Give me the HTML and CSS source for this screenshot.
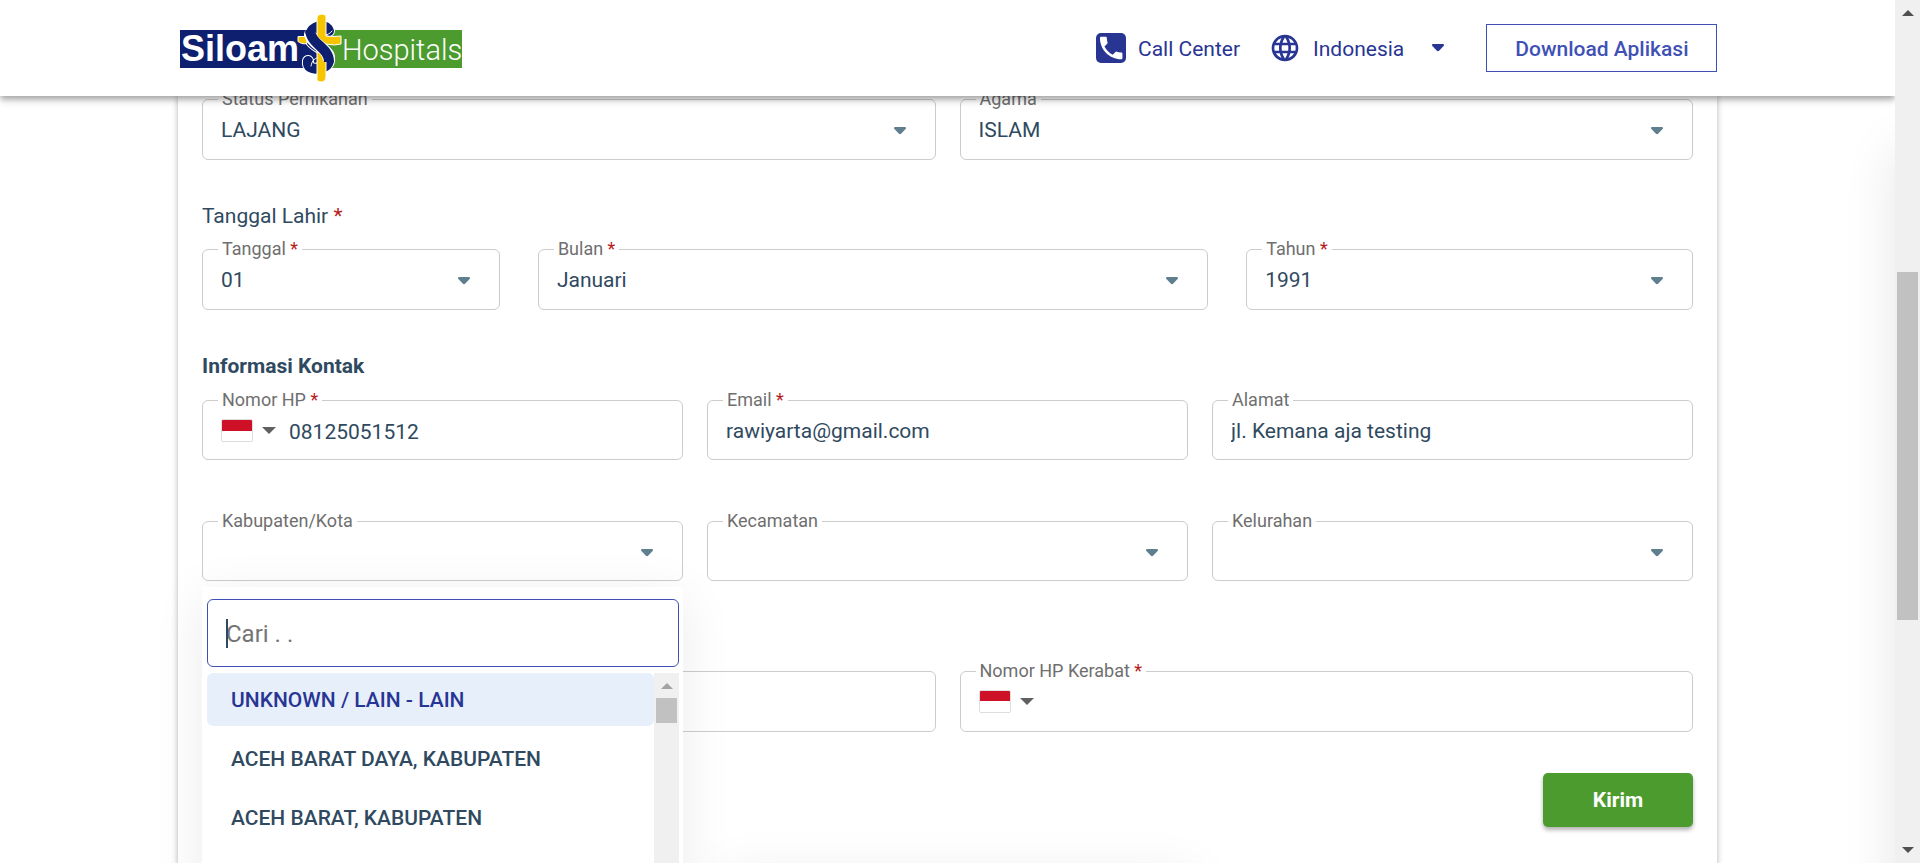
FILE: index.html
```html
<!DOCTYPE html>
<html lang="id">
<head>
<meta charset="utf-8">
<title>Siloam Hospitals</title>
<link rel="stylesheet" href="styles.css">
</head>
<body>
<svg class="defs" aria-hidden="true">
  <symbol id="caret" viewBox="0 0 12 8"><path d="M1.2 0h9.6c1.1 0 1.5 1.3.8 2.1L7.300 6.600c-.8.8-1.800.8-2.600 0L.4 2.100C-.3 1.300.1 0 1.200 0z" fill="currentColor"/></symbol>
  <symbol id="triangle" viewBox="0 0 12 6"><path d="M0 0h12L6 6z" fill="currentColor"/></symbol>
</svg>
<div class="app">
  <div class="page">
    <header class="topbar">
      <div class="topbar-inner">
        <a class="logo" href="#" aria-label="Siloam Hospitals">
          <svg width="283" height="70" viewBox="0 0 283 70">
            <rect x="0" y="16" width="141" height="38" fill="#0d1f6e"/>
            <rect x="141" y="16" width="141" height="38" fill="#4b9b2e"/>
            <text class="logo-siloam" x="1" y="47">Siloam</text>
            <text class="logo-hospitals" x="162" y="46">Hospitals</text>
            <g fill="none" stroke-linecap="round">
              <path d="M149 17C147 12 144 12 141 12C132 13 128 20 131 27C136 34 148 36 149 43C150 50 146 53 140 54C132 56 127 53 128 47" stroke="#fff" stroke-width="12"/>
              <path d="M149 17C147 12 144 12 141 12C132 13 128 20 131 27C136 34 148 36 149 43C150 50 146 53 140 54C132 56 127 53 128 47" stroke="#0d1f6e" stroke-width="10"/>
              <path d="M131 52C132 46 135 44 140 43M144 21C147 21 150 20 152 17" stroke="#fff"/>
            </g>
            <path d="M118 22.500h9v7c-4 1-7-.5-9-2z" fill="#f6c500" stroke="#fff"/>
            <path d="M137 3q1-3 5-3t4 3v19q9 1 15 0v8q-6 2-15 0V62q0 6-5 6t-4-5z" fill="#f6c500" stroke="#fff"/>
            <g fill="none">
              <path d="M130 19C131 31 149 33 149 47" stroke="#fff" stroke-width="12"/>
              <path d="M130 16C131 31 149 33 149 48" stroke="#0d1f6e" stroke-width="10"/>
            </g>
          </svg>
        </a>
        <nav class="topnav">
          <a class="nav-link" href="#">
            <svg width="30" height="30" viewBox="0 0 30 30"><rect width="30" height="30" rx="5" fill="#283593"/><path transform="translate(.2 0) scale(1.250)" d="M6.620 10.790c1.440 2.830 3.760 5.140 6.590 6.590l2.200-2.200c.27-.27.67-.36 1.020-.24 1.120.37 2.330.57 3.570.57.55 0 1 .45 1 1V20c0 .55-.45 1-1 1-9.390 0-17-7.610-17-17 0-.55.45-1 1-1h3.500c.55 0 1 .45 1 1 0 1.250.2 2.450.57 3.570.11.35.03.74-.25 1.020l-2.200 2.200z" fill="#fff"/></svg>
            <span>Call Center</span>
          </a>
          <button class="nav-link nav-language" type="button">
            <svg width="32" height="32" viewBox="0 0 24 24" fill="#283593"><path d="M11.990 2C6.470 2 2 6.480 2 12s4.470 10 9.990 10C17.520 22 22 17.520 22 12S17.520 2 11.990 2zm6.930 6h-2.950a15.650 15.650 0 0 0-1.380-3.560A8.030 8.030 0 0 1 18.920 8zM12 4.040c.830 1.200 1.480 2.530 1.910 3.960h-3.820c.43-1.430 1.080-2.760 1.910-3.960zM4.260 14C4.100 13.360 4 12.690 4 12s.1-1.360.26-2h3.380c-.08.66-.14 1.320-.14 2s.06 1.340.14 2H4.260zm.82 2h2.950c.32 1.250.78 2.450 1.380 3.560A7.987 7.987 0 0 1 5.080 16zm2.950-8H5.080a7.987 7.987 0 0 1 4.330-3.560A15.650 15.650 0 0 0 8.030 8zM12 19.960c-.83-1.200-1.480-2.530-1.910-3.960h3.820c-.43 1.430-1.080 2.760-1.910 3.960zM14.340 14H9.660c-.09-.66-.16-1.320-.16-2s.07-1.350.16-2h4.680c.09.65.16 1.320.16 2s-.07 1.340-.16 2zm.25 5.560c.6-1.110 1.060-2.310 1.380-3.560h2.950a8.030 8.030 0 0 1-4.330 3.560zM16.360 14c.08-.66.14-1.320.14-2s-.06-1.340-.14-2h3.380c.16.64.26 1.310.26 2s-.1 1.360-.26 2h-3.380z"/></svg>
            <span>Indonesia</span>
            <svg class="nav-caret" width="12" height="8"><use href="#caret"/></svg>
          </button>
          <a class="download" href="#">Download Aplikasi</a>
        </nav>
      </div>
    </header>

    <form class="card">
      <div class="row halves">
        <div class="field"><label for="status">Status Pernikahan</label><select id="status"><option>LAJANG</option></select><svg class="caret" width="12" height="8"><use href="#caret"/></svg></div>
        <div class="field"><label for="agama">Agama</label><select id="agama"><option>ISLAM</option></select><svg class="caret" width="12" height="8"><use href="#caret"/></svg></div>
      </div>

      <p class="group-title">Tanggal Lahir <i>*</i></p>
      <div class="row birth">
        <div class="field"><label for="tanggal">Tanggal <i>*</i></label><select id="tanggal"><option>01</option></select><svg class="caret" width="12" height="8"><use href="#caret"/></svg></div>
        <div class="field"><label for="bulan">Bulan <i>*</i></label><select id="bulan"><option>Januari</option></select><svg class="caret" width="12" height="8"><use href="#caret"/></svg></div>
        <div class="field"><label for="tahun">Tahun <i>*</i></label><select id="tahun"><option>1991</option></select><svg class="caret" width="12" height="8"><use href="#caret"/></svg></div>
      </div>

      <h2 class="group-title strong">Informasi Kontak</h2>
      <div class="row thirds">
        <div class="field phone">
          <label for="hp">Nomor HP <i>*</i></label>
          <button class="country" type="button" aria-label="Indonesia +62"><span class="flag"></span><svg width="14" height="7"><use href="#triangle"/></svg></button>
          <input id="hp" type="tel" value="08125051512">
        </div>
        <div class="field"><label for="email">Email <i>*</i></label><input id="email" type="email" value="rawiyarta@gmail.com"></div>
        <div class="field"><label for="alamat">Alamat</label><input id="alamat" type="text" value="jl. Kemana aja testing"></div>
      </div>

      <div class="row thirds spaced">
        <div class="field">
          <label for="kabupaten">Kabupaten/Kota</label><select id="kabupaten"></select><svg class="caret" width="12" height="8"><use href="#caret"/></svg>
          <div class="dropdown">
            <input class="search" type="text" placeholder="Cari . ." aria-label="Cari kabupaten atau kota">
            <span class="text-cursor"></span>
            <div class="list">
              <ul class="options" role="listbox">
                <li role="option" aria-selected="true">UNKNOWN / LAIN - LAIN</li>
                <li role="option">ACEH BARAT DAYA, KABUPATEN</li>
                <li role="option">ACEH BARAT, KABUPATEN</li>
              </ul>
              <div class="list-scroll"><svg width="12" height="6"><path d="M0 6h12L6 0z" fill="#a3a3a3"/></svg><span></span></div>
            </div>
          </div>
        </div>
        <div class="field"><label for="kecamatan">Kecamatan</label><select id="kecamatan"></select><svg class="caret" width="12" height="8"><use href="#caret"/></svg></div>
        <div class="field"><label for="kelurahan">Kelurahan</label><select id="kelurahan"></select><svg class="caret" width="12" height="8"><use href="#caret"/></svg></div>
      </div>

      <div class="row halves relatives">
        <div class="field"><input type="text" aria-label="Nama Kerabat"></div>
        <div class="field phone">
          <label for="hpk">Nomor HP Kerabat <i>*</i></label>
          <button class="country" type="button" aria-label="Indonesia +62"><span class="flag"></span><svg width="14" height="7"><use href="#triangle"/></svg></button>
          <input id="hpk" type="tel">
        </div>
      </div>

      <div class="actions"><button class="submit" type="submit">Kirim</button></div>
    </form>
    <div class="drawer-edge"></div>
    <div class="sheet-edge"></div>
  </div>
  <div class="scrollbar">
    <svg width="12" height="6"><path d="M0 6h12L6 0z" fill="#505050"/></svg>
    <div class="track"><div class="thumb" style="top:30.4%;height:42.8%"></div></div>
    <svg width="12" height="6"><path d="M0 0h12L6 6z" fill="#505050"/></svg>
  </div>
</div>
</body>
</html>
```

FILE: styles.css
```css
* { box-sizing: border-box; }

body {
  margin: 0;
  background: #fff;
  color: #2f4a60;
  font-family: Roboto, "Liberation Sans", sans-serif;
  font-size: 21px;
  line-height: 24px;
}

button, input, select {
  font: inherit;
  color: inherit;
}

i {
  color: #b71c1c;
  font-style: normal;
}

.defs {
  display: block;
  width: 0;
  height: 0;
}

.app {
  display: flex;
  height: 100vh;
  overflow: hidden;
}

.page {
  position: relative;
  flex: 1;
  min-width: 0;
  display: flex;
  flex-direction: column;
  overflow: hidden;
}

/* Header */
.topbar {
  position: relative;
  z-index: 5;
  flex: none;
  padding: 14px 0 12px;
  background: #fff;
  box-shadow: 0 3px 5px -1px rgba(0, 0, 0, .2), 0 5px 6px rgba(0, 0, 0, .14), 0 1px 13px rgba(0, 0, 0, .12);
}

.topbar-inner {
  display: flex;
  align-items: flex-start;
  justify-content: space-between;
  max-width: 1538px;
  margin: 0 auto;
}

.logo {
  display: flex;
  padding-left: 1px;
}

.logo-siloam {
  fill: #fff;
  font: bold 36px "Liberation Sans", sans-serif;
}

.logo-hospitals {
  fill: #fff;
  font: 300 29px Roboto, sans-serif;
}

.topnav {
  display: flex;
  align-items: center;
  height: 68px;
}

.nav-link {
  display: flex;
  align-items: center;
  gap: 12px;
  padding: 0;
  border: 0;
  background: none;
  color: #283593;
  text-decoration: none;
}

.nav-link span { padding-top: 2px; }
.nav-language { margin-left: 29px; }
.nav-caret { margin-left: 16px; }

.download {
  margin-left: 42px;
  padding: 12px 27px 10px 28px;
  border: 1px solid #3f51b5;
  color: #3f51b5;
  font-weight: 500;
  text-decoration: none;
}

/* Form */
.card {
  flex: 1 0 auto;
  width: calc(100% - 48px);
  max-width: 1539px;
  margin: 0 auto;
  padding: 3px 24px 40px;
  background: #fff;
  box-shadow: 0 0 6px rgba(0, 0, 0, .3);
}

.row { display: grid; gap: 24px; }
.halves { grid-template-columns: 1fr 1fr; }
.thirds { grid-template-columns: 1fr 1fr 1fr; }
.birth { grid-template-columns: 4fr 9fr 6fr; gap: 38px; }
.spaced { margin-top: 61px; }
.relatives { margin-top: 90px; }

.group-title {
  margin: 44px 0 21px;
  font-size: 21px;
  font-weight: 400;
}

.strong {
  margin-bottom: 22px;
  font-weight: 700;
}

.field {
  position: relative;
  display: flex;
  height: 61px;
  border: 1px solid #ccc;
  border-radius: 6px;
}

.thirds .field { height: 60px; }

.field label {
  position: absolute;
  top: -13px;
  left: 15px;
  padding: 0 4px;
  background: #fff;
  color: #6f6f6f;
  font-size: 18px;
}

.field input, .field select {
  width: 100%;
  min-width: 0;
  padding: 1px 18px 0;
  border: 0;
  border-radius: 6px;
  outline: 0;
  background: none;
  appearance: none;
}

.caret {
  position: absolute;
  top: 27px;
  right: 29px;
  color: #5f7f8f;
  pointer-events: none;
}

.phone { align-items: center; }

.country {
  display: flex;
  align-items: center;
  gap: 9px;
  flex: none;
  padding: 0 0 0 18px;
  border: 0;
  background: none;
  color: #606060;
}

.flag {
  width: 32px;
  height: 23px;
  border: 1px solid #ddd;
  border-radius: 2px;
  background: linear-gradient(#ce1126 50%, #fff 50%);
}

.field.phone input { padding: 3px 18px 0 13px; }

/* City picker */
.dropdown {
  position: absolute;
  z-index: 3;
  top: 65px;
  left: -1px;
  right: -1px;
  padding: 12px 4px 4px 5px;
  background: #fff;
  box-shadow: 0 10px 50px rgba(0, 0, 0, .08);
}

.dropdown .search {
  display: block;
  height: 68px;
  border: 1px solid #3f51b5;
  font-size: 24px;
}

.search::placeholder { color: #757575; opacity: 1; }

.text-cursor {
  position: absolute;
  top: 32px;
  left: 24px;
  width: 2px;
  height: 29px;
  background: #2f4a60;
}

.list {
  display: flex;
  height: 260px;
  margin-top: 6px;
  overflow: hidden;
}

.options {
  flex: 1;
  margin: 0;
  padding: 0;
  list-style: none;
  font-weight: 500;
}

.options li {
  margin-bottom: 6px;
  padding: 15px 24px 14px;
  border-radius: 6px;
}

.options [aria-selected] {
  background: #e7effb;
  color: #283593;
}

.list-scroll {
  display: flex;
  flex-direction: column;
  align-items: center;
  gap: 9px;
  width: 25px;
  padding-top: 10px;
  background: #f0f0f0;
}

.list-scroll span {
  width: 21px;
  height: 25px;
  background: #c1c1c1;
}

.actions {
  display: flex;
  justify-content: flex-end;
  margin-top: 41px;
}

.submit {
  width: 150px;
  padding: 15px;
  border: 0;
  border-radius: 5px;
  background: #4b9b2e;
  color: #fff;
  font-weight: 700;
  box-shadow: 0 3px 4px rgba(0, 0, 0, .3);
}

.drawer-edge {
  position: absolute;
  top: 150px;
  bottom: -60px;
  left: 100%;
  width: 200px;
  box-shadow: 0 0 50px rgba(0, 0, 0, .1);
}

.sheet-edge {
  position: absolute;
  z-index: 4;
  top: 100%;
  left: 38%;
  width: 25%;
  height: 200px;
  box-shadow: 0 10px 50px rgba(0, 0, 0, .07);
}

/* Window scrollbar */
.scrollbar {
  display: flex;
  flex-direction: column;
  align-items: center;
  gap: 9px;
  flex: none;
  width: 25px;
  padding: 10px 0;
  background: #f0f0f0;
}

.track {
  position: relative;
  flex: 1;
  width: 21px;
}

.thumb {
  position: absolute;
  width: 100%;
  background: #c1c1c1;
}
```
